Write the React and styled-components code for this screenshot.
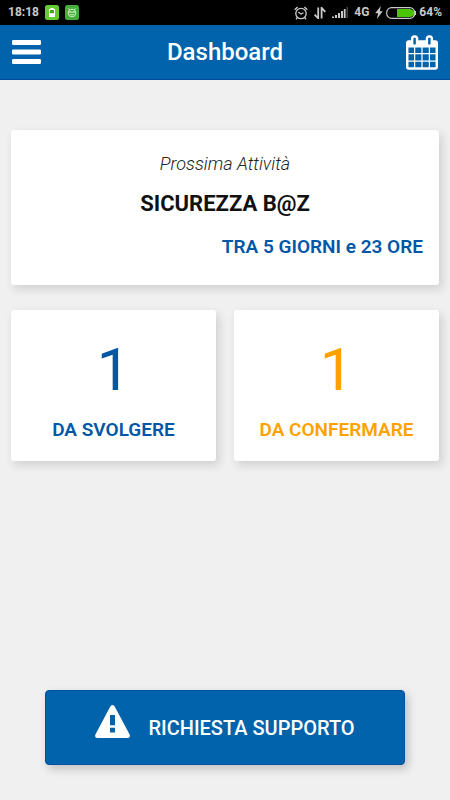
import React from "react";
import styled, { createGlobalStyle } from "styled-components";

const GlobalStyle = createGlobalStyle`
  * {
    box-sizing: border-box;
  }

  body {
    margin: 0;
    background: #f0f0f0;
    font-family: Roboto, "Liberation Sans", sans-serif;
  }

  button {
    border: 0;
    padding: 0;
    background: none;
    color: inherit;
    font-family: inherit;
    cursor: pointer;
  }

  svg {
    display: block;
    flex: none;
  }
`;

const Page = styled.div`
  min-height: 100vh;
  display: flex;
  flex-direction: column;
`;

const StatusBar = styled.div`
  height: 25px;
  padding: 0 8px;
  background: #000;
  color: #c9c9c9;
  font-size: 12px;
  font-weight: 700;
  line-height: 25px;
  display: flex;
  justify-content: space-between;
`;

const StatusGroup = styled.div`
  display: flex;
  align-items: center;
  gap: ${(props) => props.$gap}px;
`;

const Header = styled.header`
  height: 55px;
  padding: 0 12px;
  background: #0063ab;
  border-bottom: 1px solid #004a9c;
  color: #fff;
  display: flex;
  align-items: center;
  justify-content: space-between;
`;

const IconButton = styled.button`
  width: 32px;
`;

const Title = styled.h1`
  margin: 0;
  font-size: 24px;
  font-weight: 500;
  line-height: 32px;
`;

const Content = styled.main`
  flex: 1;
  padding: 50px 11px 35px;
  display: flex;
  flex-direction: column;
`;

const Card = styled.section`
  background: #fff;
  border-radius: 3px;
  box-shadow: 3px 4px 10px rgba(0, 0, 0, 0.14);
`;

const NextCard = styled(Card)`
  padding: 20px 16px 24px;
  text-align: center;
`;

const NextLabel = styled.p`
  margin: 0;
  color: #222;
  font-size: 18px;
  font-style: italic;
  font-weight: 300;
  line-height: 28px;
`;

const NextTitle = styled.h2`
  margin: 12px 0 15px;
  color: #111;
  font-size: 22px;
  font-weight: 700;
  line-height: 28px;
`;

const NextTime = styled.p`
  margin: 0;
  color: #0057a8;
  font-size: 19px;
  font-weight: 600;
  line-height: 28px;
  text-align: right;
`;

const Counters = styled.div`
  margin-top: 25px;
  display: grid;
  grid-template-columns: 1fr 1fr;
  gap: 18px;
`;

const CounterCard = styled(Card)`
  padding: 24px 8px 17px;
  color: ${(props) => props.$color};
  text-align: center;
`;

const Count = styled.div`
  font-size: 60px;
  line-height: 72px;
`;

const CounterLabel = styled.div`
  padding-top: 10px;
  font-size: 19px;
  font-weight: 600;
  line-height: 28px;
`;

const SupportButton = styled.button`
  width: 84%;
  height: 75px;
  margin: auto auto 0;
  background: #0063ab;
  border: 1px solid #004fa3;
  border-radius: 4px;
  box-shadow: 3px 4px 10px rgba(0, 0, 0, 0.2);
  color: #fff;
  font-size: 20px;
  font-weight: 500;
  display: flex;
  align-items: center;
  justify-content: center;
  gap: 18px;

  & svg {
    margin-bottom: 12px;
  }
`;

const BatteryAppIcon = () => (
  <svg width="14" height="15" viewBox="0 0 14 15">
    <rect width="14" height="15" rx="2.5" fill="#66cb32" />
    <path d="M5.3 3h3.4v1H10v8H4V4h1.3z" fill="#fff" />
    <path d="M5 5h4v3.2H5z" fill="#43a51c" />
  </svg>
);

const RobotAppIcon = () => (
  <svg width="14" height="15" viewBox="0 0 14 15">
    <rect width="14" height="15" rx="2.5" fill="#45ae3b" />
    <g fill="none" stroke="#d9f3d3" strokeWidth="0.9">
      <circle cx="7" cy="8" r="3.8" />
      <path d="M3.4 3.2l1.4 1.6M10.6 3.2L9.2 4.8M3.5 7.2h7M5 9.3q2 1.4 4 0M5.3 6v1M8.7 6v1" />
    </g>
  </svg>
);

const AlarmIcon = () => (
  <svg width="14" height="14" viewBox="0 0 14 14" fill="none" stroke="#c9c9c9">
    <circle cx="7" cy="7.5" r="5.2" strokeWidth="1.3" />
    <path d="M4.3 6l2.7 2 2.5-1.3" strokeWidth="1.2" />
    <path d="M.7 3.8L3.6 1M13.3 3.8L10.4 1M3.2 11.8L2 13.2M10.8 11.8l1.2 1.4" strokeWidth="1.4" />
  </svg>
);

const DataIcon = () => (
  <svg width="12" height="12" viewBox="0 0 12 12" fill="none" stroke="#c9c9c9" strokeWidth="1.8">
    <path d="M4.2 .5v10.8L.6 7.5M7.6 11.5V.8l3.7 4" />
  </svg>
);

const SignalIcon = () => (
  <svg width="16" height="11" viewBox="0 0 16 11" fill="#c9c9c9">
    <path d="M0 9.5h2V11H0zM3 8h2v3H3zM6 6h2v5H6zM9 4h2v7H9zM11.8 2h1.8v9h-1.8z" />
    <path d="M14.5 0H16v11h-1.5z" fill="#444" />
  </svg>
);

const ChargeIcon = () => (
  <svg width="8" height="13" viewBox="0 0 8 13" fill="#c9c9c9">
    <path d="M5.8 0L.2 7.2h3L1.8 13 7.8 5.3h-3z" />
  </svg>
);

const BatteryIcon = () => (
  <svg width="30" height="12" viewBox="0 0 30 12">
    <path d="M11 2h13q4.5 1 4.5 4T24 10H11z" fill="#4cc400" />
    <rect x=".7" y=".7" width="28" height="10.6" rx="4.8" fill="none" stroke="#c9c9c9" strokeWidth="1.2" />
    <path d="M29 4h1v4h-1z" fill="#c9c9c9" />
  </svg>
);

const MenuIcon = () => (
  <svg width="29" height="24" viewBox="0 0 29 24" fill="#fff">
    <rect width="29" height="5" rx="1.3" />
    <rect y="9.5" width="29" height="5" rx="1.3" />
    <rect y="19" width="29" height="5" rx="1.3" />
  </svg>
);

const CalendarIcon = () => (
  <svg width="32" height="35" viewBox="64 0 1664 1792" fill="#fff">
    <path d="M192 1664h288v-288h-288v288zm352 0h320v-288h-320v288zm-352-352h288v-320h-288v320zm352 0h320v-320h-320v320zm-352-384h288v-288h-288v288zm736 736h320v-288h-320v288zm-384-736h320v-288h-320v288zm768 736h288v-288h-288v288zm-384-352h320v-320h-320v320zm-352-864v-288q0-13-9.5-22.5t-22.5-9.5h-64q-13 0-22.5 9.5t-9.5 22.5v288q0 13 9.5 22.5t22.5 9.5h64q13 0 22.5-9.5t9.5-22.5zm736 864h288v-320h-288v320zm-384-384h320v-288h-320v288zm384 0h288v-288h-288v288zm32-480v-288q0-13-9.5-22.5t-22.5-9.5h-64q-13 0-22.5 9.5t-9.5 22.5v288q0 13 9.5 22.5t22.5 9.5h64q13 0 22.5-9.5t9.5-22.5zm384-64v1280q0 52-38 90t-90 38h-1408q-52 0-90-38t-38-90v-1280q0-52 38-90t90-38h128v-96q0-66 47-113t113-47h64q66 0 113 47t47 113v96h384v-96q0-66 47-113t113-47h64q66 0 113 47t47 113v96h128q52 0 90 38t38 90z" />
  </svg>
);

const WarningIcon = () => (
  <svg width="35" height="33" viewBox="0 0 35 33">
    <path
      d="M15.3 1.4q2.2-2.8 4.4 0L34.6 29.4q1.2 3.1-2 3.6H2.4q-3.2-.5-2-3.6zM15 10v10.2h5V10zm0 12.8v4.8h5v-4.8z"
      fill="#fff"
      fillRule="evenodd"
    />
  </svg>
);

const counters = [
  { label: "DA SVOLGERE", value: 1, color: "#0057a8" },
  { label: "DA CONFERMARE", value: 1, color: "#ffa200" },
];

export default function App() {
  return (
    <Page>
      <GlobalStyle />
      <StatusBar>
        <StatusGroup $gap={6}>
          <span>18:18</span>
          <BatteryAppIcon />
          <RobotAppIcon />
        </StatusGroup>
        <StatusGroup $gap={6}>
          <AlarmIcon />
          <DataIcon />
          <SignalIcon />
          <span>4G</span>
          <StatusGroup $gap={3}>
            <ChargeIcon />
            <BatteryIcon />
            <span>64%</span>
          </StatusGroup>
        </StatusGroup>
      </StatusBar>
      <Header>
        <IconButton type="button" aria-label="Menu">
          <MenuIcon />
        </IconButton>
        <Title>Dashboard</Title>
        <IconButton type="button" aria-label="Calendario">
          <CalendarIcon />
        </IconButton>
      </Header>
      <Content>
        <NextCard>
          <NextLabel>Prossima Attività</NextLabel>
          <NextTitle>SICUREZZA B@Z</NextTitle>
          <NextTime>TRA 5 GIORNI e 23 ORE</NextTime>
        </NextCard>
        <Counters>
          {counters.map((item) => (
            <CounterCard key={item.label} $color={item.color}>
              <Count>{item.value}</Count>
              <CounterLabel>{item.label}</CounterLabel>
            </CounterCard>
          ))}
        </Counters>
        <SupportButton type="button">
          <WarningIcon />
          RICHIESTA SUPPORTO
        </SupportButton>
      </Content>
    </Page>
  );
}
